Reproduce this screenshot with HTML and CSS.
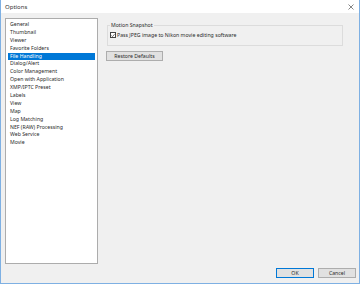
FILE: index.html
```html
<!DOCTYPE html>
<html>
<head>
<meta charset="utf-8">
<link rel="stylesheet" href="styles.css">
</head>
<body>
<div class="window">
  <div class="titlebar">
    <span class="title">Options</span>
    <svg class="close" width="6" height="6" viewBox="0 0 6 6"><path d="M0.5 0.5 L5.5 5.5 M5.5 0.5 L0.5 5.5" stroke="#666" stroke-width="0.8"/></svg>
  </div>
  <div class="body">
    <div class="main">
      <ul class="list">
        <li>General</li>
        <li>Thumbnail</li>
        <li>Viewer</li>
        <li>Favorite Folders</li>
        <li class="sel">File Handling</li>
        <li>Dialog/Alert</li>
        <li>Color Management</li>
        <li>Open with Application</li>
        <li>XMP/IPTC Preset</li>
        <li>Labels</li>
        <li>View</li>
        <li>Map</li>
        <li>Log Matching</li>
        <li>NEF (RAW) Processing</li>
        <li>Web Service</li>
        <li>Movie</li>
      </ul>
      <div class="pane">
        <fieldset class="group">
          <legend>Motion Snapshot</legend>
          <label class="check">
            <span class="box"><svg width="5" height="5" viewBox="0 0 5 5"><path d="M0.5 2.5 L1.9 3.9 L4.5 0.8" fill="none" stroke="#222" stroke-width="0.8"/></svg></span>
            Pass JPEG image to Nikon movie editing software
          </label>
        </fieldset>
        <button class="btn restore">Restore Defaults</button>
      </div>
    </div>
    <div class="footer">
      <button class="btn ok">OK</button>
      <button class="btn cancel">Cancel</button>
    </div>
  </div>
</div>
</body>
</html>
```
FILE: styles.css
```css
* { box-sizing: border-box; }
html, body { margin: 0; padding: 0; }
body {
  width: 360px;
  height: 284px;
  font-family: "Noto Sans", "Open Sans", sans-serif;
  font-size: 5.2px;
  color: #2a2a2a;
}
.window {
  width: 360px;
  height: 284px;
  border: 1px solid #7eb0e3;
  border-top: none;
  display: flex;
  flex-direction: column;
  background: #f0f0f0;
}
.titlebar {
  height: 13px;
  background: #fff;
  display: flex;
  align-items: center;
  justify-content: space-between;
  padding: 1px 5px 0 4px;
  font-size: 6px;
}
.title { color: #333; }
.close { display: block; }
.body {
  flex: 1;
  display: flex;
  flex-direction: column;
}
.main {
  display: flex;
  padding: 5px 0 0 4px;
}
.list {
  list-style: none;
  margin: 0;
  padding: 2px 2px 0 2px;
  width: 93px;
  height: 246px;
  background: #fff;
  border: 1px solid #acacac;
}
.list li {
  height: 7.9px;
  line-height: 7.9px;
  padding-left: 2px;
  white-space: nowrap;
}
.list li.sel {
  background: #0078d7;
  color: #fff;
}
.pane {
  margin-left: 8px;
  display: flex;
  flex-direction: column;
  align-items: flex-start;
  padding-top: 4px;
}
.group {
  width: 236px;
  height: 24px;
  border: 1px solid #dcdcdc;
  padding: 3px 0 0 2px;
  margin: 0 0 0 1px;
}
.group legend {
  padding: 0 1px;
  margin-left: 0;
  line-height: 6px;
}
.check {
  display: flex;
  align-items: center;
  gap: 1px;
  white-space: nowrap;
}
.box {
  width: 6px;
  height: 6px;
  border: 1px solid #444;
  background: #fff;
  display: flex;
  align-items: center;
  justify-content: center;
}
.box svg { display: block; }
.btn {
  font-family: inherit;
  font-size: 5.2px;
  height: 10px;
  padding: 0;
  line-height: 8px;
  background: #e1e1e1;
  border: 1px solid #adadad;
  color: #2a2a2a;
}
.restore {
  width: 57px;
  margin-top: 5px;
}
.footer {
  margin-top: auto;
  display: flex;
  justify-content: flex-end;
  gap: 4px;
  padding: 0 3px 5px 0;
}
.ok {
  width: 38px;
  border-color: #0078d7;
}
.cancel { width: 38px; }
```
